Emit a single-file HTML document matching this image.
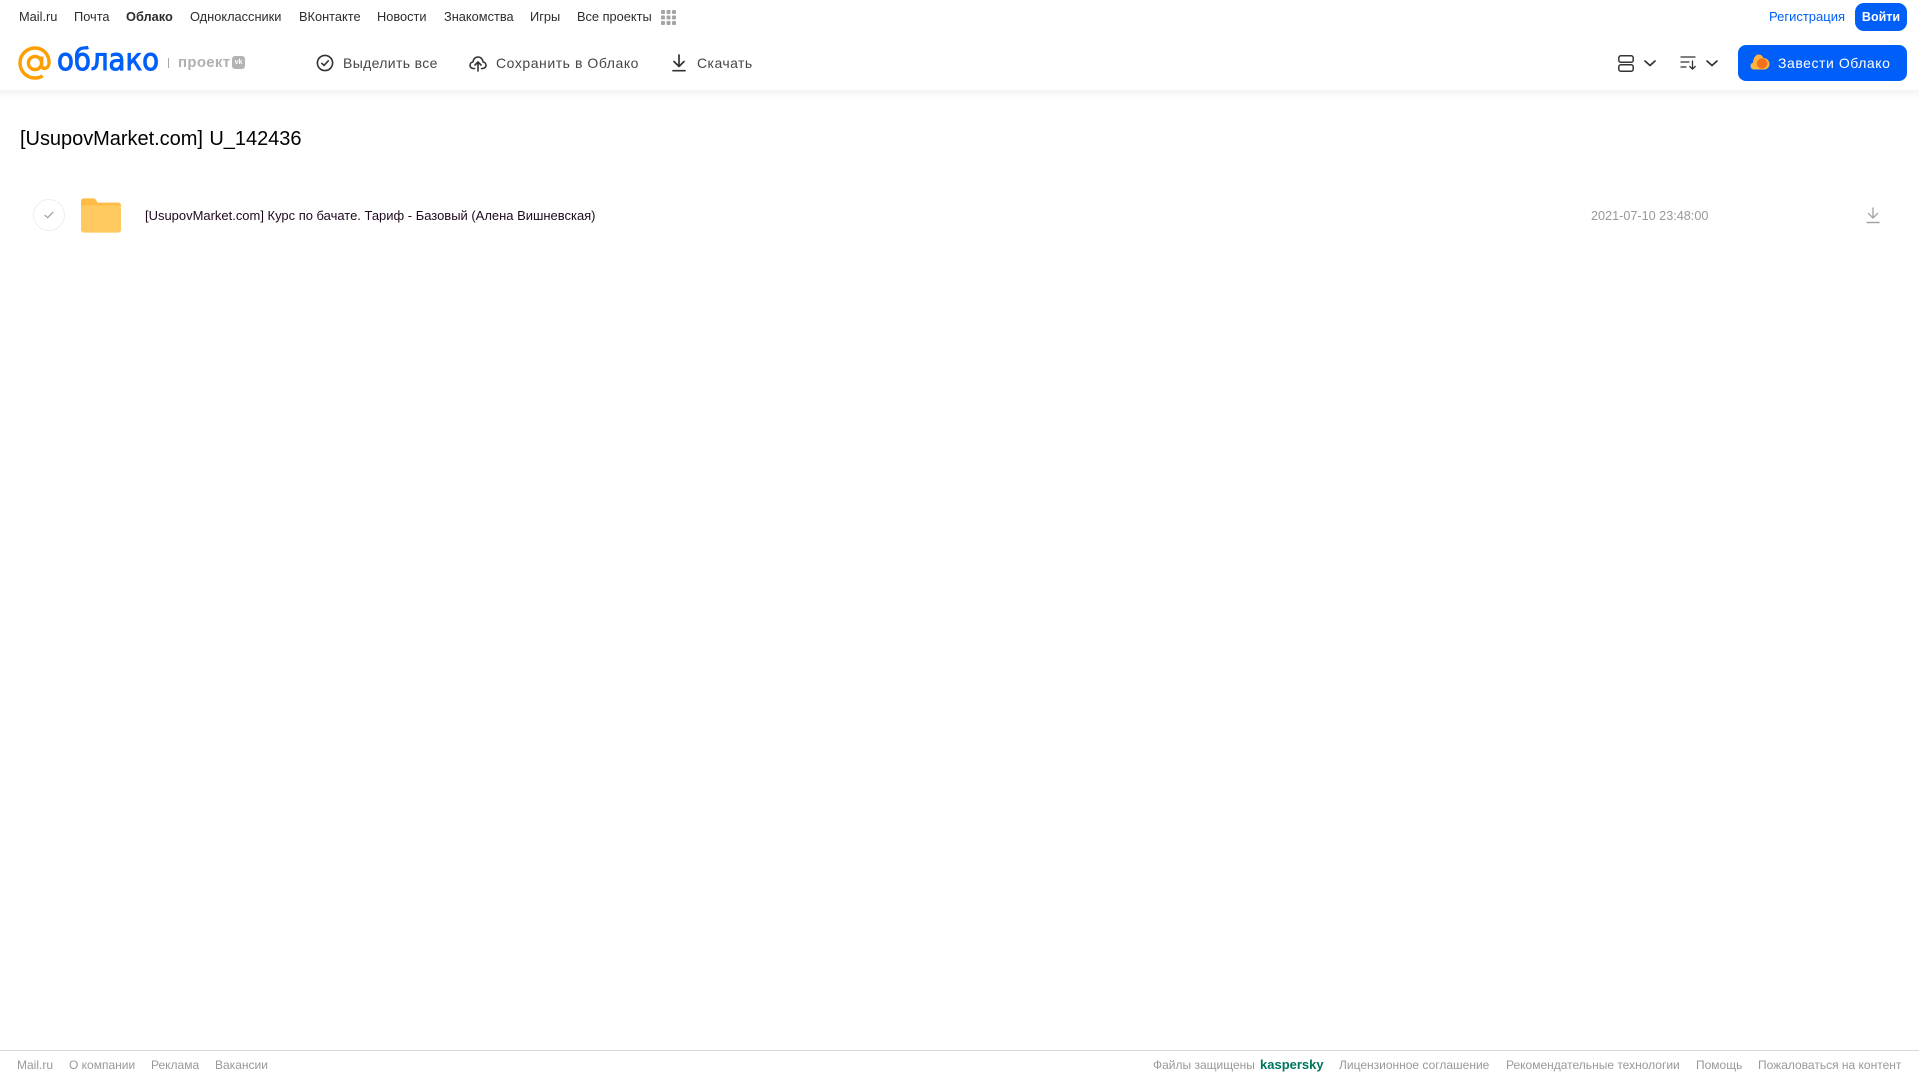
<!DOCTYPE html>
<html lang="ru">
<head>
<meta charset="utf-8">
<title>Облако</title>
<style>
html,body{margin:0;padding:0;background:#fff;width:1919px;height:1079px;overflow:hidden}
body{position:relative;font-family:"Liberation Sans","DejaVu Sans",sans-serif}
.t{position:absolute;white-space:nowrap;line-height:16px}
.n{font-size:12.8px;color:#2c2d2e;top:9px}
.b{font-size:14px;color:#454647;top:55px;letter-spacing:.45px}
.f{font-size:12px;color:#999;top:1057px}
svg{position:absolute;display:block}
</style>
</head>
<body>
<div style="position:absolute;left:0;top:0;width:1919px;height:90px;background:#fff"></div>
<div style="position:absolute;left:0;top:90px;width:1919px;height:8px;background:linear-gradient(#f3f3f3,#fff)"></div>

<span class="t n" style="left:19px">Mail.ru</span>
<span class="t n" style="left:74px">Почта</span>
<span class="t n" style="left:126px;font-weight:bold">Облако</span>
<span class="t n" style="left:190px">Одноклассники</span>
<span class="t n" style="left:299px">ВКонтакте</span>
<span class="t n" style="left:377px">Новости</span>
<span class="t n" style="left:444px">Знакомства</span>
<span class="t n" style="left:530px">Игры</span>
<span class="t n" style="left:577px">Все проекты</span>
<svg style="left:661px;top:10px" width="15" height="15" viewBox="0 0 15 15" fill="#a5a5a5">
<rect x="0" y="0" width="4" height="4" rx="1"/><rect x="5.5" y="0" width="4" height="4" rx="1"/><rect x="11" y="0" width="4" height="4" rx="1"/>
<rect x="0" y="5.5" width="4" height="4" rx="1"/><rect x="5.5" y="5.5" width="4" height="4" rx="1"/><rect x="11" y="5.5" width="4" height="4" rx="1"/>
<rect x="0" y="11" width="4" height="4" rx="1"/><rect x="5.5" y="11" width="4" height="4" rx="1"/><rect x="11" y="11" width="4" height="4" rx="1"/>
</svg>

<span class="t" style="left:1769px;top:9px;font-size:13px;color:#005ff9">Регистрация</span>
<div style="position:absolute;left:1855px;top:3px;width:52px;height:28px;background:#005ff9;border-radius:9px;color:#fff;font-size:12.5px;font-weight:bold;line-height:28px;text-align:center">Войти</div>

<!-- logo -->
<svg style="left:18px;top:46px" width="34" height="34" viewBox="0 0 34 34" fill="none" stroke="#ff9e00" stroke-width="3.4">
<circle cx="17" cy="17" r="6.6"/>
<path d="M23.6 10.5V19.5C23.6 23.6 30.4 23.6 31 17.5C31.6 8.5 25 2 17 2C8.7 2 2 8.7 2 17C2 25.3 8.7 32 17 32C20 32 22.4 31.3 24.6 29.8"/>
</svg>
<span class="t" style="left:57px;top:44px;font-size:30px;line-height:34px;color:#005ff9;-webkit-text-stroke:1px #005ff9;font-family:'DejaVu Sans',sans-serif;transform-origin:left center;transform:scaleX(.92)">облако</span>
<div style="position:absolute;left:168px;top:58px;width:1px;height:10px;background:#a8a8a8"></div>
<span class="t" style="left:178px;top:55px;font-size:15px;font-weight:bold;color:#b0b0b0;letter-spacing:.3px">проект</span>
<div style="position:absolute;left:232px;top:56px;width:13px;height:13px;background:#b3b3b3;border-radius:3px;color:#fff;font-size:7px;font-weight:bold;line-height:13px;text-align:center">vk</div>

<!-- toolbar -->
<svg style="left:316px;top:54px" width="18" height="18" viewBox="0 0 18 18" fill="none" stroke="#333" stroke-width="1.6" stroke-linecap="round" stroke-linejoin="round">
<circle cx="9" cy="9" r="7.6"/><path d="M5.8 9.3L8 11.4L12.3 6.8"/>
</svg>
<span class="t b" style="left:343px;letter-spacing:.35px">Выделить все</span>
<svg style="left:469px;top:54px" width="18" height="18" viewBox="0 0 18 18" fill="none" stroke="#333" stroke-width="1.6" stroke-linecap="round" stroke-linejoin="round">
<path d="M5.5 14.5H4.4C2.5 14.5 1 13 1 11.2C1 9.5 2.3 8.2 3.9 8C4.3 5 6.4 3 9 3C11.6 3 13.7 5 14.1 8C15.7 8.2 17 9.5 17 11.2C17 13 15.5 14.5 13.6 14.5H12.5"/>
<path d="M9 17V8.5M6 11L9 8L12 11"/>
</svg>
<span class="t b" style="left:496px;letter-spacing:.55px">Сохранить в Облако</span>
<svg style="left:671px;top:54px" width="16" height="18" viewBox="0 0 16 18" fill="none" stroke="#333" stroke-width="1.7" stroke-linecap="round" stroke-linejoin="round">
<path d="M8 1V12M3 7.5L8 12.5L13 7.5M2 16.7H14"/>
</svg>
<span class="t b" style="left:697px">Скачать</span>

<svg style="left:1618px;top:55px" width="16" height="17" viewBox="0 0 16 17" fill="none" stroke="#333" stroke-width="1.5">
<rect x=".8" y=".8" width="14.4" height="6.4" rx="2"/><rect x=".8" y="9.8" width="14.4" height="6.4" rx="2"/>
</svg>
<svg style="left:1643px;top:59px" width="14" height="9" viewBox="0 0 14 9" fill="none" stroke="#333" stroke-width="1.7" stroke-linecap="round" stroke-linejoin="round"><path d="M2 2L7 6.5L12 2"/></svg>
<svg style="left:1680px;top:55px" width="17" height="16" viewBox="0 0 17 16" fill="none" stroke="#333" stroke-width="1.3" stroke-linecap="round" stroke-linejoin="round">
<path d="M1 2H15M1 7H9M1 12H6M12.5 6V14M9.8 11.5L12.5 14.2L15.2 11.5"/>
</svg>
<svg style="left:1705px;top:59px" width="14" height="9" viewBox="0 0 14 9" fill="none" stroke="#333" stroke-width="1.7" stroke-linecap="round" stroke-linejoin="round"><path d="M2 2L7 6.5L12 2"/></svg>

<div style="position:absolute;left:1738px;top:45px;width:169px;height:36px;background:#005ff9;border-radius:8px"></div>
<svg style="left:1750px;top:54px" width="20" height="16" viewBox="0 0 20 16">
<path d="M4 15.5C1.8 15.5 .5 13.8 .5 12C.5 10.3 1.6 9 3 8.6C3.4 4 5.5 .5 8.7 .5C11 .5 12.6 2 13.3 4C16.6 4 19.5 6.5 19.5 10C19.5 13.3 17 15.5 14 15.5Z" fill="#ffb341"/>
<circle cx="12" cy="9.5" r="5.2" fill="#f4701f"/>
</svg>
<span class="t" style="left:1778px;top:55px;font-size:14px;color:#fff;letter-spacing:.55px">Завести Облако</span>

<!-- title -->
<span class="t" style="left:20px;top:127px;font-size:20px;line-height:24px;color:#000;word-spacing:1px;letter-spacing:-.03px">[UsupovMarket.com] U_142436</span>

<!-- row -->
<div style="position:absolute;left:33px;top:199px;width:30px;height:30px;border:1px solid #eee;border-radius:50%"></div>
<svg style="left:43px;top:210px" width="12" height="10" viewBox="0 0 12 10" fill="none" stroke="#a0a0a0" stroke-width="1.3" stroke-linecap="round" stroke-linejoin="round"><path d="M2 5.3L4.7 7.7L10 2.2"/></svg>
<svg style="left:81px;top:198px" width="40" height="35" viewBox="0 0 41 35">
<path d="M0 3C0 1.3 1.3 0 3 0H12.5C14 0 15 .7 15.7 2L17 4.3H38C39.7 4.3 41 5.6 41 7.3V8H0Z" fill="#ffbb45"/>
<path d="M0 7H38C39.7 7 41 8.3 41 10V32C41 33.7 39.7 35 38 35H3C1.3 35 0 33.7 0 32Z" fill="#ffc95f"/>
</svg>
<span class="t" style="left:145px;top:208px;font-size:12.97px;color:#1f0820">[UsupovMarket.com] Курс по бачате. Тариф - Базовый (Алена Вишневская)</span>
<span class="t" style="left:1591px;top:208px;font-size:12.65px;color:#999">2021-07-10 23:48:00</span>
<svg style="left:1865px;top:206px" width="16" height="18" viewBox="0 0 16 18" fill="none" stroke="#a6a6a6" stroke-width="1.4" stroke-linecap="round" stroke-linejoin="round">
<path d="M8 2V12M3.5 7.5L8 12L12.5 7.5M2 16.5H14"/>
</svg>

<!-- footer -->
<div style="position:absolute;left:0;top:1050px;width:1919px;height:1px;background:#d8d8d8"></div>
<span class="t f" style="left:17px">Mail.ru</span>
<span class="t f" style="left:69px">О компании</span>
<span class="t f" style="left:151px">Реклама</span>
<span class="t f" style="left:215px">Вакансии</span>
<span class="t f" style="left:1153px">Файлы защищены</span>
<span class="t" style="left:1260px;top:1057px;font-size:13px;font-weight:bold;color:#00745f">kaspersky</span>
<span class="t f" style="left:1339px">Лицензионное соглашение</span>
<span class="t f" style="left:1506px">Рекомендательные технологии</span>
<span class="t f" style="left:1696px">Помощь</span>
<span class="t f" style="left:1758px">Пожаловаться на контент</span>
</body>
</html>
